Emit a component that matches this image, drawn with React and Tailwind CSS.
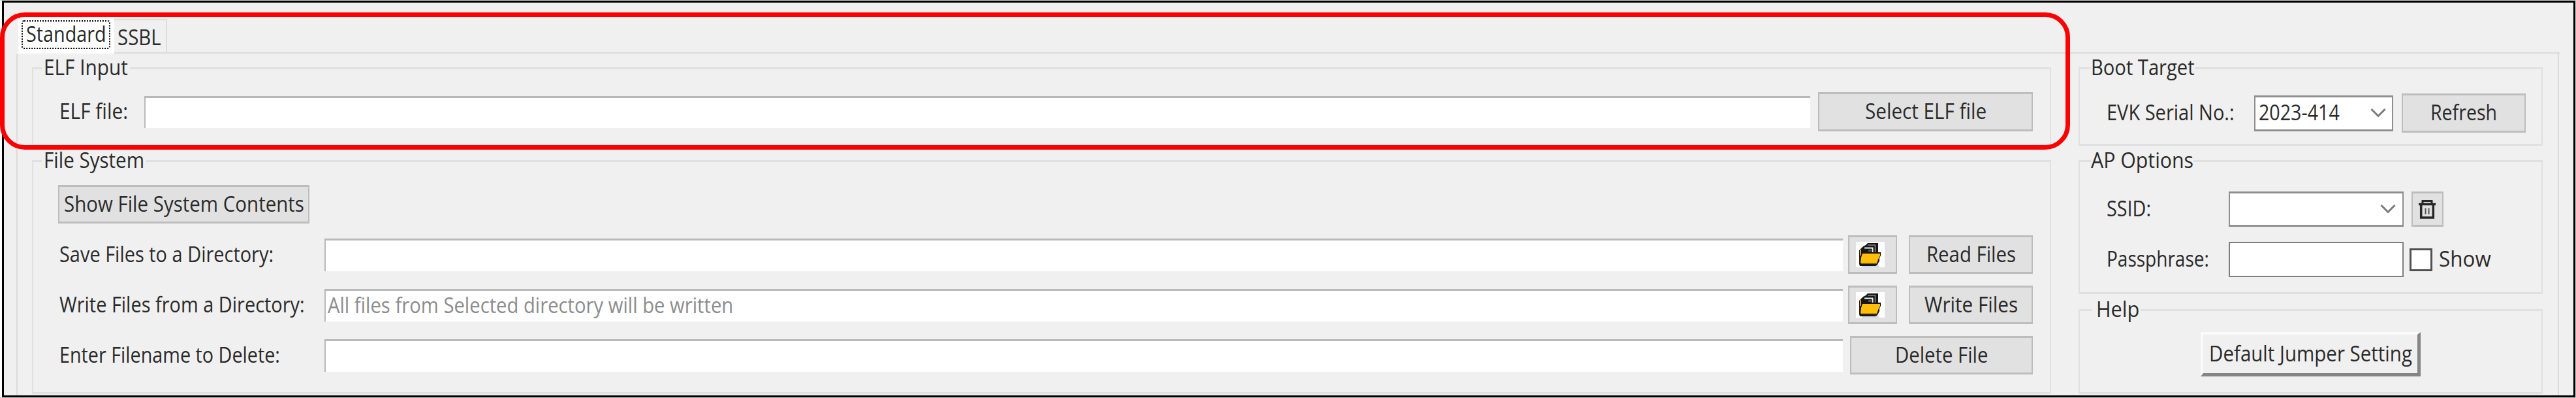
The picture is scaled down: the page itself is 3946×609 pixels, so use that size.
import { useLayoutEffect, useRef } from "react";

// Text condensed horizontally so that its glyphs fill the width given in
// className; the side bearings hang 2px out on either side.
function Text({ children, className }) {
  const box = useRef(null);
  const inner = useRef(null);
  useLayoutEffect(() => {
    const scale = (box.current.clientWidth + 4) / inner.current.offsetWidth;
    inner.current.style.transform = `translateX(-2px) scaleX(${scale})`;
  }, []);
  return (
    <span ref={box} className={`block shrink-0 pb-[2px] leading-[44px] whitespace-nowrap ${className}`}>
      <span ref={inner} className="inline-block origin-left align-top">
        {children}
      </span>
    </span>
  );
}

function Group({ title, titleClass, className, children }) {
  return (
    <fieldset className={`min-w-0 border-x-2 border-y-3 border-[#e0e0e0] ${className}`}>
      <legend className={`h-[46px] ${titleClass}`}>{title}</legend>
      {children}
    </fieldset>
  );
}

function Button({ className, children }) {
  return (
    <button
      className={`flex shrink-0 items-center justify-center border-x-2 border-y-3 border-[#bdbdbd] bg-[#e1e1e1] ${className}`}
    >
      {children}
    </button>
  );
}

function Field({ className, children }) {
  return (
    <div className={`flex items-center border-t-3 border-l-2 border-[#b9b9b9] bg-white ${className}`}>{children}</div>
  );
}

function Chevron() {
  return (
    <svg width="24" height="16" viewBox="0 0 24 16" fill="none" stroke="#7a7a7a" strokeWidth="3">
      <path d="M1.5 2 12 12.500 22.500 2" />
    </svg>
  );
}

function FolderIcon() {
  return (
    <svg width="44" height="39" viewBox="0 0 44 39" className="mr-[8px]">
      <path fill="#fff" d="M0 0h44v39H0z" />
      <path fill="#cfdbe6" d="M8 36h26l2 3H10z" />
      <path fill="#161616" d="M15 5 18 2h16v14h4v5l-2 4v4l-3 6-3 2H6l-1-3V13l3-3 3-3z" />
      <path stroke="#8a8a8a" strokeWidth="1.500" fill="none" d="M18 5h11.500v11" />
      <path stroke="#f2f2f2" strokeWidth="2" fill="none" d="M13 9.500h12.500V16" />
      <path fill="#555" d="M19 12h4v3h-4z" />
      <path fill="#e59a00" d="M6 12h2v9H6z" />
      <path fill="#ffbe0a" d="M10 18h27v3l-3 6-2 6H8l-1-1 1-8z" />
      <path fill="#d98f00" d="M8 32h24v1.500H8z" />
    </svg>
  );
}

function TrashIcon() {
  return (
    <svg width="28" height="32" viewBox="0 0 28 32" fill="none" stroke="#262626" className="mr-px mb-px shrink-0">
      <path strokeWidth="3.500" d="M1 8.500h26M4.700 8v21h18.600V8" />
      <path strokeWidth="3" d="M7 8V3.500h14V8" />
      <path stroke="#555" strokeWidth="2" d="M11.500 14.500v9.500M16.500 14.500v9.500" />
    </svg>
  );
}

function DirectoryRow({ label, labelClass, placeholder, action, actionClass }) {
  return (
    <div className="mt-[18px] flex h-[59px] items-center pr-[26px] pl-[42px]">
      <div className="w-[404px] shrink-0">
        <Text className={labelClass}>{label}</Text>
      </div>
      <Field className="h-[50px] w-[2326px] pl-[5px]">{placeholder}</Field>
      <Button className="ml-2 h-[59px] w-[75px]">
        <FolderIcon />
      </Button>
      <Button className="ml-[18px] h-[59px] w-[190px]">
        <Text className={actionClass}>{action}</Text>
      </Button>
    </div>
  );
}

export default function App() {
  return (
    <div className="relative h-[609px] w-[3946px] overflow-hidden bg-[#d0d4d0] pt-px font-['Open_Sans','Noto_Sans',sans-serif] text-[33px] font-medium text-[#2a2a2a]">
      <div className="flex h-[607px] w-full border-l-3 border-white pr-px">
        <div className="flex w-full flex-col border-3 border-black bg-[#f0f0f0] pr-[22px] pl-[19px]">
          <div className="flex h-[78px] shrink-0 pt-[21px] pl-[3px]">
            <div className="w-[147px] bg-white pt-[6px] pl-[5px]">
              <div className="flex h-[44px] w-[136px] items-center justify-center rounded-[4px] border-2 border-dotted border-black">
                <Text className="w-[119px] pb-[1px]">Standard</Text>
              </div>
            </div>
            <div className="mt-[4px] flex w-[81px] border-t-2 border-r-2 border-b-2 border-[#dcdcdc] pt-[4px] pl-[7px]">
              <Text className="w-[63px]">SSBL</Text>
            </div>
            <div className="-mr-[1px] flex-1 border-b-2 border-[#dcdcdc]" />
          </div>

          <div className="flex min-h-0 flex-1 gap-[42px] border-x-2 border-[#dcdcdc] pl-[22px]">
            <div className="-mt-px w-[3093px] shrink-0">
              <Group
                className="h-[142px]"
                titleClass="ml-[13px] px-[5px]"
                title={<Text className="w-[125px] pb-[6px] leading-[40px]">ELF Input</Text>}
              >
                <div className="mt-[14px] flex h-[60px] items-center pr-[26px] pl-[42px]">
                  <div className="w-[128px] shrink-0">
                    <Text className="w-[101px]">ELF file:</Text>
                  </div>
                  <Field className="h-[49px] w-[2553px]" />
                  <Button className="ml-[12px] h-[60px] w-[329px]">
                    <Text className="w-[182px]">Select ELF file</Text>
                  </Button>
                </div>
              </Group>
              <Group
                className="h-[380px]"
                titleClass="ml-[13px] px-[5px]"
                title={<Text className="w-[150px] pb-[6px] leading-[40px]">File System</Text>}
              >
                <Button className="mt-[14px] ml-[38px] h-[59px] w-[385px]">
                  <Text className="w-[364px]">Show File System Contents</Text>
                </Button>
                <DirectoryRow
                  label="Save Files to a Directory:"
                  labelClass="w-[324px]"
                  action="Read Files"
                  actionClass="w-[133px]"
                />
                <DirectoryRow
                  label="Write Files from a Directory:"
                  labelClass="w-[372px]"
                  placeholder={
                    <Text className="w-[617px] text-[#8c8c8c]">All files from Selected directory will be written</Text>
                  }
                  action="Write Files"
                  actionClass="w-[139px]"
                />
                <div className="mt-[18px] flex h-[59px] items-center pr-[26px] pl-[42px]">
                  <div className="w-[404px] shrink-0">
                    <Text className="w-[334px]">Enter Filename to Delete:</Text>
                  </div>
                  <Field className="h-[50px] w-[2326px]" />
                  <Button className="ml-[11px] h-[59px] w-[280px]">
                    <Text className="w-[138px]">Delete File</Text>
                  </Button>
                </div>
              </Group>
            </div>

            <div className="-mt-px w-[711px] shrink-0">
              <Group
                className="h-[142px]"
                titleClass="ml-[17px] px-[2px]"
                title={<Text className="w-[155px] pb-[6px] leading-[40px]">Boot Target</Text>}
              >
                <div className="mt-[16px] flex h-[60px] items-center pl-[43px]">
                  <div className="w-[224px] shrink-0">
                    <Text className="w-[192px]">EVK Serial No.:</Text>
                  </div>
                  <div className="flex h-[55px] w-[213px] items-center justify-between border-x-2 border-y-3 border-[#8f8f8f] bg-white pr-[9px] pl-[7px]">
                    <Text className="w-[120px]">2023-414</Text>
                    <Chevron />
                  </div>
                  <Button className="ml-[13px] h-[60px] w-[190px]">
                    <Text className="w-[98px]">Refresh</Text>
                  </Button>
                </div>
              </Group>
              <Group
                className="h-[227px]"
                titleClass="ml-[17px] px-[2px]"
                title={<Text className="w-[153px] pb-[6px] leading-[40px]">AP Options</Text>}
              >
                <div className="mt-[24px] flex h-[54px] items-center pl-[43px]">
                  <div className="w-[185px] shrink-0">
                    <Text className="w-[64px]">SSID:</Text>
                  </div>
                  <div className="flex h-[54px] w-[268px] items-center justify-end border-x-2 border-y-3 border-[#8f8f8f] bg-white pr-[10px]">
                    <Chevron />
                  </div>
                  <Button className="ml-[12px] h-[54px] w-[49px]">
                    <TrashIcon />
                  </Button>
                </div>
                <div className="mt-[23px] flex h-[54px] items-center pl-[43px]">
                  <div className="w-[185px] shrink-0">
                    <Text className="w-[153px]">Passphrase:</Text>
                  </div>
                  <div className="h-[54px] w-[268px] border-x-2 border-y-[2.5px] border-[#7f7f7f] bg-white" />
                  <div className="ml-[9px] h-[35px] w-[35px] border-3 border-[#505050] bg-white" />
                  <Text className="ml-[12px] w-[76px]">Show</Text>
                </div>
              </Group>
              <Group
                className="mt-px h-[152px]"
                titleClass="ml-[18px] pr-[4px] pl-[9px]"
                title={<Text className="w-[62px] pb-[7px] leading-[38px]">Help</Text>}
              >
                <button className="mt-[11px] ml-[185px] flex h-[68px] w-[337px] items-center justify-center border-t-4 border-r-5 border-b-5 border-l-4 border-t-[#fafafa] border-r-[#858585] border-b-[#858585] border-l-[#fafafa]">
                  <Text className="w-[307px]">Default Jumper Setting</Text>
                </button>
              </Group>
            </div>
          </div>
        </div>
      </div>
      {/* Highlight drawn over the ELF input area */}
      <div className="absolute top-[19px] left-0 h-[210px] w-[3171px] rounded-[38px] border-7 border-[#ff0000]" />
    </div>
  );
}
